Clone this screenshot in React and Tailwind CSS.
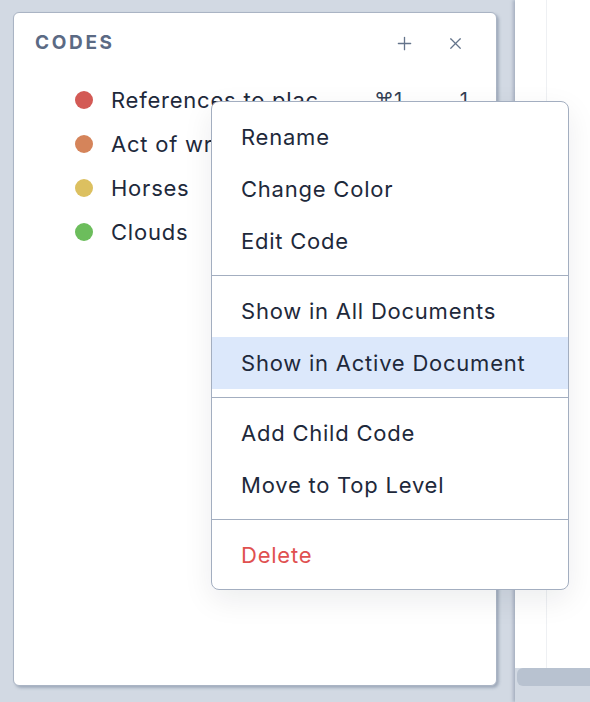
import React from 'react';
import { Plus, X } from 'lucide-react';

const codes = [
	{ name: 'References to places', color: 'bg-[#d35a55]', key: '⌘1', count: '1' },
	{ name: 'Act of writing', color: 'bg-[#d5845a]' },
	{ name: 'Horses', color: 'bg-[#dcc060]' },
	{ name: 'Clouds', color: 'bg-[#6cbd5c]' },
];

const groups = [
	['Rename', 'Change Color', 'Edit Code'],
	['Show in All Documents', 'Show in Active Document'],
	['Add Child Code', 'Move to Top Level'],
	['Delete'],
];

function CodeRow({ code }) {
	return (
		<div className="flex h-[44px] items-center pl-[61px] pr-[28px]">
			<span className={`h-[18px] w-[18px] shrink-0 rounded-full ${code.color}`} />
			<span className="ml-[18px] mr-[36px] flex-1 truncate text-[22px] tracking-[0.035em] text-[#1e293b]">{code.name}</span>
			{code.key && <span className="w-[84px] text-[20px] text-[#334155]">{code.key}</span>}
			{code.count && <span className="w-[10px] text-right text-[20px] text-[#334155]">{code.count}</span>}
		</div>
	);
}

function ContextMenu() {
	return (
		<div className="absolute left-[211px] top-[101px] w-[358px] rounded-lg border border-[#a3aec0] bg-white shadow-[0_10px_30px_rgba(15,23,42,0.08)]">
			{groups.map((items, gi) => (
				<div key={gi} className={`pb-[8px] pt-[9px] ${gi > 0 ? 'border-t border-[#a3aec0]' : ''}`}>
					{items.map((label) => (
						<div
							key={label}
							className={`flex h-[52px] items-center px-[29px] text-[22px] tracking-[0.035em] ${
								label === 'Delete' ? 'text-[#e05050]' : 'text-[#1e293b]'
							} ${label === 'Show in Active Document' ? 'bg-[#dce8fb]' : ''}`}
						>
							{label}
						</div>
					))}
				</div>
			))}
		</div>
	);
}

export default function App() {
	return (
		<div className="relative flex h-[702px] w-[590px] overflow-hidden bg-[#d2d9e3] font-['Inter',sans-serif]">
			<div className="w-[497px] shrink-0 pb-[16px] pl-[13px] pt-[12px]">
				<div className="flex h-full flex-col rounded-md border border-[#aab4c4] bg-white shadow-[2px_2px_3px_rgba(100,116,139,0.45)]">
					<div className="flex h-[60px] items-center pl-[21px] pr-[31px]">
						<span className="flex-1 text-[19px] font-bold tracking-[0.14em] text-[#5b6a84]">CODES</span>
						<Plus className="mr-[31px] h-[21px] w-[21px] text-[#64748b]" strokeWidth={1.5} />
						<X className="h-[19px] w-[19px] text-[#64748b]" strokeWidth={1.5} />
					</div>
					<div className="flex flex-col pt-[5px]">
						{codes.map((c) => (
							<CodeRow key={c.name} code={c} />
						))}
					</div>
				</div>
			</div>
			<div className="ml-[18px] flex flex-1 flex-col pb-[16px] shadow-[-2px_0_3px_rgba(100,116,139,0.4)]">
				<div className="flex flex-1 bg-white">
					<div className="w-[32px] border-r border-[#eef0f3]" />
				</div>
				<div className="ml-[2px] h-[18px] rounded-l-md bg-[#b8c2d0]" />
			</div>
			<ContextMenu />
		</div>
	);
}
